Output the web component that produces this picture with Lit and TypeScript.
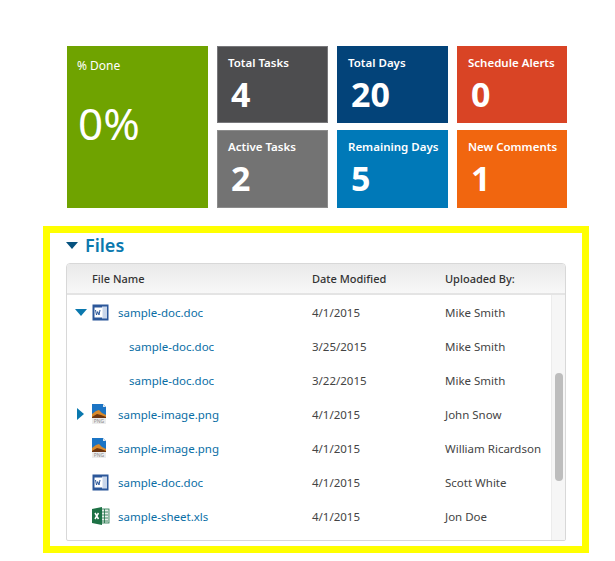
import { LitElement, html, css, svg, nothing } from "lit";
import { customElement } from "lit/decorators.js";

type FileIcon = "doc" | "png" | "xls" | null;
type Twisty = "open" | "closed" | null;

interface FileRow {
  name: string;
  date: string;
  by: string;
  icon: FileIcon;
  twisty: Twisty;
}

const TILES = [
  { label: "Total Tasks", value: "4", cls: "dark" },
  { label: "Total Days", value: "20", cls: "navy" },
  { label: "Schedule Alerts", value: "0", cls: "red" },
  { label: "Active Tasks", value: "2", cls: "gray" },
  { label: "Remaining Days", value: "5", cls: "blue" },
  { label: "New Comments", value: "1", cls: "orange" },
];

const ROWS: FileRow[] = [
  { name: "sample-doc.doc", date: "4/1/2015", by: "Mike Smith", icon: "doc", twisty: "open" },
  { name: "sample-doc.doc", date: "3/25/2015", by: "Mike Smith", icon: null, twisty: null },
  { name: "sample-doc.doc", date: "3/22/2015", by: "Mike Smith", icon: null, twisty: null },
  { name: "sample-image.png", date: "4/1/2015", by: "John Snow", icon: "png", twisty: "closed" },
  { name: "sample-image.png", date: "4/1/2015", by: "William Ricardson", icon: "png", twisty: null },
  { name: "sample-doc.doc", date: "4/1/2015", by: "Scott White", icon: "doc", twisty: null },
  { name: "sample-sheet.xls", date: "4/1/2015", by: "Jon Doe", icon: "xls", twisty: null },
];

const fileIcon = (kind: FileIcon) => {
  if (kind === "doc") {
    return svg`<svg width="17" height="17" viewBox="0 0 17 17">
      <rect x="0.5" y="0.5" width="16" height="16" fill="#2b579a"/>
      <rect x="10" y="2.5" width="5" height="12" fill="#c9d6ea"/>
      <rect x="2.5" y="3.5" width="8" height="10" fill="#fff"/>
      <path d="M3.5 6l1 5 1.2-3.4L7 11l1-5" fill="none" stroke="#2b579a" stroke-width="1"/>
    </svg>`;
  }
  if (kind === "png") {
    return svg`<svg width="15" height="20" viewBox="0 0 15 20">
      <path d="M0 0h11l3 3v17H0z" fill="#ececec"/>
      <path d="M0 0h11l3 3v8H0z" fill="#1b74c4"/>
      <path d="M11 0l3 3h-3z" fill="#dfe7ee"/>
      <path d="M0 10l4-3 3-1 3 3 4 2v3H0z" fill="#d98a2b"/>
      <path d="M0 13l5-3 4 1 5 2v1H0z" fill="#6e3610"/>
      <text x="7" y="19" text-anchor="middle" font-size="5" fill="#8f8f8f" font-family="Noto Sans, sans-serif">PNG</text>
    </svg>`;
  }
  return svg`<svg width="18" height="18" viewBox="0 0 18 18">
    <rect x="7" y="2" width="10" height="14" fill="#e6efe9" stroke="#1d7145" stroke-width="0.8"/>
    <path d="M9 5h7M9 8h7M9 11h7M9 14h7M12.5 2v14" stroke="#1d7145" stroke-width="0.8"/>
    <path d="M0 2l10-2v18L0 16z" fill="#1d7145"/>
    <path d="M3 6l3.5 6M6.5 6L3 12" stroke="#fff" stroke-width="1.5"/>
  </svg>`;
};

@customElement("app-root")
export class AppRoot extends LitElement {
  static styles = css`
    :host {
      display: block;
      width: 615px;
      height: 561px;
      overflow: hidden;
      background: #fff;
      font-family: "Noto Sans", "Open Sans", sans-serif;
    }
    .tiles {
      display: grid;
      grid-template-columns: 141px 111px 111px 110px;
      grid-template-rows: 77px 78px;
      column-gap: 9px;
      row-gap: 7px;
      padding: 46px 0 0 67px;
    }
    .tile {
      color: #fff;
      padding: 9px 11px 0;
      box-sizing: border-box;
      overflow: hidden;
    }
    .label {
      font-size: 11.5px;
      font-weight: 600;
      line-height: 15px;
      white-space: nowrap;
    }
    .value {
      font-size: 34px;
      font-weight: 700;
      line-height: 38px;
      margin: 5px 0 0 3px;
    }
    .done {
      grid-row: 1 / span 2;
      background: #6fa300;
      padding: 12px 10px 0;
    }
    .done .label {
      font-size: 12px;
      font-weight: 400;
    }
    .done .value {
      font-size: 44px;
      font-weight: 400;
      line-height: 60px;
      margin: 20px 0 0 1px;
    }
    .dark { background: #4d4d4f; border: 1px solid #77777a; padding: 8px 10px 0; }
    .gray { background: #737373; border: 1px solid #8c8c8c; padding: 8px 10px 0; }
    .navy { background: #034379; }
    .blue { background: #0079b8; }
    .red { background: #d94425; }
    .orange { background: #f1660f; }
    .frame {
      width: 546px;
      height: 327px;
      box-sizing: border-box;
      margin: 18px 0 0 43px;
      border: 7px solid #ffff00;
      padding: 0 16px;
    }
    .heading {
      display: flex;
      align-items: center;
      gap: 7px;
      height: 24px;
      margin-bottom: 6px;
      color: #0a78ae;
      font-size: 18px;
      font-weight: 600;
    }
    .table {
      box-sizing: border-box;
      width: 500px;
      height: 278px;
      border: 1px solid #d8d8d8;
      border-radius: 4px 4px 2px 2px;
      overflow: hidden;
      font-size: 11.5px;
      color: #444;
    }
    .cols {
      display: grid;
      grid-template-columns: 245px 133px 1fr;
      align-items: center;
    }
    .head {
      height: 29px;
      background: linear-gradient(#e9e9e9, #f8f8f8);
      border-bottom: 2px solid #e4e4e4;
      font-size: 11px;
      font-weight: 500;
      color: #333;
    }
    .head > :first-child {
      padding-left: 25px;
    }
    .body {
      display: flex;
      height: 246px;
    }
    .rows {
      flex: 1;
    }
    .row {
      height: 34px;
    }
    .name {
      display: flex;
      align-items: center;
      color: #0a6ea5;
      white-space: nowrap;
    }
    .twisty {
      width: 17px;
      margin-left: 8px;
      display: flex;
      align-items: center;
    }
    .icon {
      width: 26px;
      display: flex;
      align-items: center;
    }
    .child {
      padding-left: 62px;
    }
    .track {
      width: 14px;
      box-sizing: border-box;
      background: #f6f6f6;
      border-left: 1px solid #ececec;
      padding: 78px 2px 0 3px;
    }
    .thumb {
      height: 108px;
      background: #bdbdbd;
      border-radius: 4px;
    }
  `;

  private _twisty(kind: Twisty) {
    if (kind === "open") {
      return html`<svg width="12" height="7" viewBox="0 0 12 7"><path d="M0 0h12L6 7z" fill="#0a78ae" /></svg>`;
    }
    if (kind === "closed") {
      return html`<svg width="7" height="12" viewBox="0 0 7 12" style="margin-left:2px"><path d="M0 0l7 6-7 6z" fill="#0a78ae" /></svg>`;
    }
    return nothing;
  }

  private _row(row: FileRow) {
    const name = row.icon
      ? html`<div class="name">
          <span class="twisty">${this._twisty(row.twisty)}</span>
          <span class="icon">${fileIcon(row.icon)}</span>
          <span>${row.name}</span>
        </div>`
      : html`<div class="name child">${row.name}</div>`;
    return html`<div class="cols row">
      ${name}
      <div>${row.date}</div>
      <div>${row.by}</div>
    </div>`;
  }

  render() {
    return html`
      <div class="tiles">
        <div class="tile done">
          <div class="label">% Done</div>
          <div class="value">0%</div>
        </div>
        ${TILES.map(
          (t) => html`<div class="tile ${t.cls}">
            <div class="label">${t.label}</div>
            <div class="value">${t.value}</div>
          </div>`
        )}
      </div>
      <div class="frame">
        <div class="heading">
          <svg width="12" height="7" viewBox="0 0 12 7"><path d="M0 0h12L6 7z" fill="#06527f" /></svg>
          <span>Files</span>
        </div>
        <div class="table">
          <div class="cols head">
            <div>File Name</div>
            <div>Date Modified</div>
            <div>Uploaded By:</div>
          </div>
          <div class="body">
            <div class="rows">${ROWS.map((r) => this._row(r))}</div>
            <div class="track"><div class="thumb"></div></div>
          </div>
        </div>
      </div>
    `;
  }
}
